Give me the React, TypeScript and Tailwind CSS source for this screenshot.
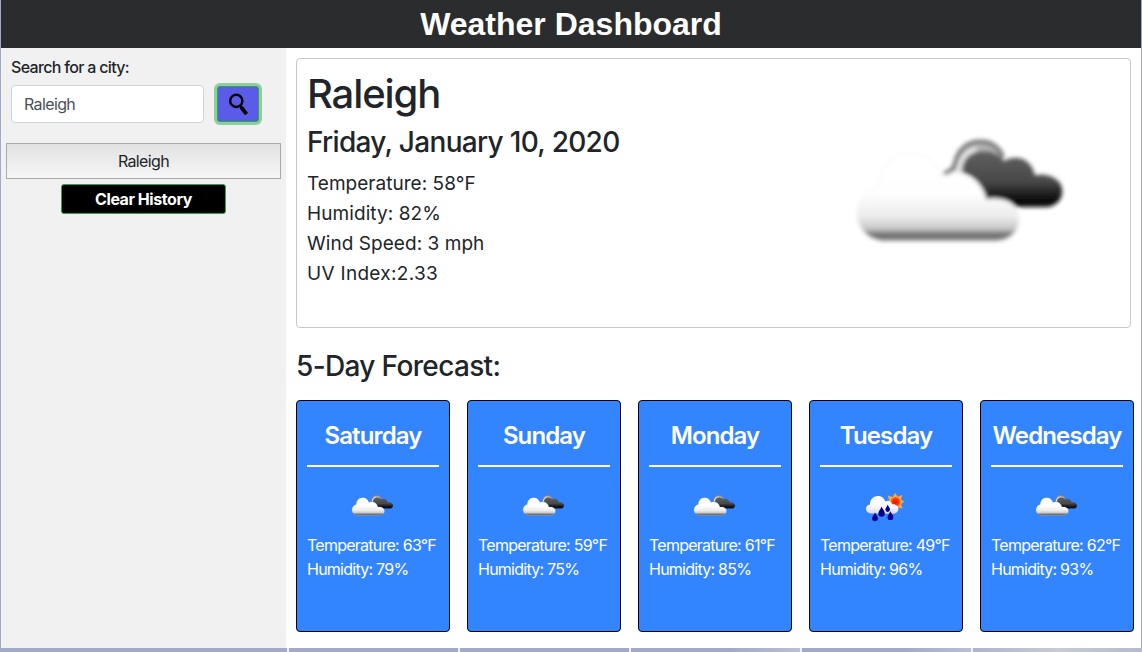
import React from "react";

function CloudIcon({ id, className, soft }: { id: string; className: string; soft?: boolean }) {
  return (
    <svg viewBox="0 0 250 250" className={className} aria-hidden="true">
      <defs>
        <linearGradient id={`${id}-light`} x1="0" y1="0" x2="0" y2="1">
          <stop offset="0" stopColor="#fff" />
          <stop offset=".45" stopColor="#fefefe" />
          <stop offset=".72" stopColor="#ececec" />
          <stop offset=".86" stopColor="#c8c8c8" />
          <stop offset=".93" stopColor="#6c6c6c" />
          <stop offset="1" stopColor="#808080" />
        </linearGradient>
        <linearGradient id={`${id}-dark`} x1="0" y1="0" x2="0" y2="1">
          <stop offset="0" stopColor="#606060" />
          <stop offset=".55" stopColor="#484848" />
          <stop offset=".9" stopColor="#080808" />
          <stop offset="1" stopColor="#111" />
        </linearGradient>
        <filter id={`${id}-soft`} x="-10%" y="-10%" width="120%" height="120%">
          <feGaussianBlur stdDeviation={soft ? 6 : 3} />
        </filter>
      </defs>
      <g transform="translate(2 52) scale(.33333)" filter={`url(#${id}-soft)`}>
        <path d="M345 150C345 95 380 58 425 58C460 58 486 80 495 115L440 100L372 155Z" fill="#b4b4b4" />
        <path d="M314 158C336 154 346 140 350 122C358 86 386 62 424 62C456 62 480 80 492 108" fill="none" stroke="#777" strokeWidth="13" />
        <path d="M358 152C362 112 384 90 412 84" fill="none" stroke="#f0f0f0" strokeWidth="11" />
        <path d="M372 155C368 118 395 90 435 90C465 90 485 105 495 120C530 98 580 112 587 163C630 155 670 175 670 210C670 240 645 258 620 258H530C515 240 490 228 440 238C435 200 410 165 372 155Z" fill={`url(#${id}-dark)`} />
        <path d="M130 360C80 352 52 315 55 270C58 235 85 205 120 198C120 140 155 97 215 97C262 97 292 125 308 165C370 145 430 175 442 235C490 225 540 250 540 295C540 335 505 360 470 360Z" fill={`url(#${id}-light)`} stroke="#ededed" strokeWidth="2" />
      </g>
    </svg>
  );
}

function RainIcon({ className }: { className: string }) {
  return (
    <svg viewBox="0 0 50 50" className={className} aria-hidden="true">
      <defs>
        <radialGradient id="sun-core">
          <stop offset="0" stopColor="#f00" />
          <stop offset=".65" stopColor="#fb3a0c" />
          <stop offset="1" stopColor="#ff8c28" />
        </radialGradient>
        <linearGradient id="rain-cloud" x1="0" y1="0" x2="0" y2="1">
          <stop offset=".5" stopColor="#fff" />
          <stop offset="1" stopColor="#d8d8e4" />
        </linearGradient>
      </defs>
      <path d="M34.2 12L36.6 15.8L41.2 14L40 18.4L43.3 20.8L40 23L41.5 27.6L37 26.6L34.5 30L32 26L27 24L28.5 20.5L26.8 14.4L31.6 15.9Z" fill="#ffab38" />
      <circle cx="34.5" cy="21" r="5.2" fill="url(#sun-core)" />
      <path d="M9.5 32.5C3.5 31.5 3.5 24.5 9 23.5C8.5 13.5 22 12 24.2 20.5C28 18.4 30.5 20.5 31 23.3C38.8 22.5 39.5 31.8 33 32.8Z" fill="url(#rain-cloud)" />
      <g fill="#00008f">
        <path d="M20.5 25.5C22 28.5 23.8 30.2 23.8 32.6A3.2 3.2 0 0 1 17.4 32.6C17.4 30.2 19.5 28.5 20.5 25.5Z" />
        <path d="M26.7 23.5C27.7 26 29 27 29 28.6A2.3 2.3 0 0 1 24.4 28.6C24.4 27 25.8 26 26.7 23.5Z" />
        <path d="M14 31.5C15.3 34 16.9 35.4 16.9 37.3A2.9 2.9 0 0 1 11.1 37.3C11.1 35.4 13 34 14 31.5Z" />
        <path d="M29.4 30.3C30.6 33 32.3 34.4 32.3 36.2A2.9 2.9 0 0 1 26.5 36.2C26.5 34.4 28.4 33 29.4 30.3Z" />
      </g>
    </svg>
  );
}

const days = [
  { name: "Saturday", temp: 63, humidity: 79, rain: false },
  { name: "Sunday", temp: 59, humidity: 75, rain: false },
  { name: "Monday", temp: 61, humidity: 85, rain: false },
  { name: "Tuesday", temp: 49, humidity: 96, rain: true },
  { name: "Wednesday", temp: 62, humidity: 93, rain: false },
];

export default function App() {
  return (
    <div className="flex h-[652px] w-[1142px] flex-col overflow-hidden bg-[#a2aaca] font-['Inter','Liberation_Sans',sans-serif] text-[#212529]">
      <div className="mx-px flex h-[648px] flex-col bg-white">
        <header className="flex h-12 items-center justify-center bg-[#2b2c2e]">
          <h1 className="whitespace-nowrap font-['Liberation_Sans',Arial,sans-serif] text-[32px] leading-[38px] font-bold text-white">Weather Dashboard</h1>
        </header>
        <div className="flex h-[600px]">
          <aside className="w-[285px] shrink-0 bg-[#f1f1f1] pt-[7px]">
            <label htmlFor="city" className="ml-2.5 block text-base leading-6 font-medium tracking-[-0.68px]">Search for a city:</label>
            <div className="mt-1.5 ml-2.5 flex">
              <input id="city" defaultValue="Raleigh" className="h-[38px] w-[193px] rounded border border-[#ced4da] bg-white px-3 text-base tracking-[-0.62px] text-[#495057] outline-none" />
              <button aria-label="Search" className="mt-px ml-[13px] flex h-9 w-[42px] items-center justify-center rounded-[3px] border border-[#28a745] bg-[#5b5bea] ring-[3px] ring-[#8fce9f]">
                <svg viewBox="0 0 22 24" className="h-6 w-[22px]" fill="none" stroke="#000">
                  <circle cx="9.3" cy="8.9" r="6.1" strokeWidth="2.4" />
                  <path d="M13 13.6L14.6 15.8" strokeWidth="2.6" />
                  <path d="M14.2 15.2L19.5 22.2" strokeWidth="3.8" />
                </svg>
              </button>
            </div>
            <button className="mt-5 ml-[5px] block h-9 w-[275px] border border-[#a9a9a9] bg-linear-to-b from-[#e2e2e2] to-[#f6f6f6] text-base leading-6 tracking-[-0.62px]">Raleigh</button>
            <button className="mt-[5px] ml-[60px] block h-[30px] w-[165px] rounded-[3px] border border-[#28a745] bg-black text-base leading-6 font-bold tracking-[-0.45px] text-white">Clear History</button>
          </aside>
          <main className="min-w-0 flex-1 pt-2.5 pl-2.5">
            <section className="flex h-[270px] w-[835px] justify-between rounded border border-[#c8c8c8] pt-2.5 pl-2.5">
              <div className="whitespace-nowrap">
                <h2 className="mt-px text-[40px] leading-12 font-medium tracking-[-1.1px]">Raleigh</h2>
                <p className="mt-[7px] text-[28px] leading-[34px] font-medium tracking-[-0.69px]">Friday, January 10, 2020</p>
                <div className="mt-2.5 text-[19px] leading-[30px]">
                  <p className="tracking-[0.03px]">Temperature: 58°F</p>
                  <p className="tracking-[0.08px]">Humidity: 82%</p>
                  <p className="tracking-[0.05px]">Wind Speed: 3 mph</p>
                  <p className="tracking-[0.3px]">UV Index:2.33</p>
                </div>
              </div>
              <CloudIcon id="current" soft className="mr-[43px] size-[250px]" />
            </section>
            <h2 className="mt-[21px] text-[28px] leading-[34px] font-medium tracking-[-0.65px]">5-Day Forecast:</h2>
            <div className="mt-[17px] flex gap-[17px]">
              {days.map((day) => (
                <article key={day.name} className="flex h-[232px] w-[154px] shrink-0 flex-col rounded border border-black bg-[#3385ff] px-2.5 pt-5 whitespace-nowrap text-white">
                  <h3 className="flex justify-center text-2xl leading-[29px] font-semibold tracking-[-0.87px]">{day.name}</h3>
                  <hr className="mt-[15px] border-0 border-t-2 border-white" />
                  <div className="mt-3.5 flex justify-center">
                    {day.rain ? <RainIcon className="size-[50px]" /> : <CloudIcon id={day.name} className="size-[50px]" />}
                  </div>
                  <div className="mt-0.5 text-base leading-6 tracking-[-0.75px]">
                    <p>Temperature: {day.temp}°F</p>
                    <p>Humidity: {day.humidity}%</p>
                  </div>
                </article>
              ))}
            </div>
          </main>
        </div>
      </div>
      <div className="flex h-1 gap-0.5 bg-[#f0f1f7]">
        <div className="w-[287px] bg-[#a2aaca]" />
        <div className="w-[169px] bg-[#a2aaca]" />
        <div className="w-[169px] bg-[#a2aaca]" />
        <div className="w-[169px] bg-linear-to-r from-[#a2aaca] from-60% to-[#bbbfd0]" />
        <div className="w-[169px] bg-linear-to-r from-[#a2aaca] from-60% to-[#b9bfd4]" />
        <div className="flex-1 bg-linear-to-r from-[#adb4cd] via-[#c8cad4] to-[#b5bbce]" />
      </div>
    </div>
  );
}
